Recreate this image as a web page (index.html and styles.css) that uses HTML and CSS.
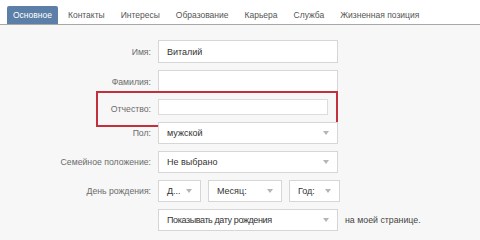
FILE: index.html
```html
<!DOCTYPE html>
<html lang="ru">
<head>
<meta charset="utf-8">
<link rel="stylesheet" href="styles.css">
</head>
<body>
<div class="tabs">
  <span class="tab active">Основное</span>
  <span class="tab">Контакты</span>
  <span class="tab">Интересы</span>
  <span class="tab">Образование</span>
  <span class="tab">Карьера</span>
  <span class="tab">Служба</span>
  <span class="tab">Жизненная позиция</span>
</div>
<div class="form">
  <div class="row tall">
    <span class="lbl">Имя:</span>
    <div class="field w180">Виталий</div>
  </div>
  <div class="row tall">
    <span class="lbl">Фамилия:</span>
    <div class="field w180"></div>
  </div>
  <div class="row mid">
    <span class="lbl">Отчество:</span>
    <div class="field small"></div>
    <div class="highlight"></div>
  </div>
  <div class="row">
    <span class="lbl">Пол:</span>
    <div class="field select w180"><span>мужской</span><i class="arrow"></i></div>
  </div>
  <div class="row">
    <span class="lbl">Семейное положение:</span>
    <div class="field select w180"><span>Не выбрано</span><i class="arrow"></i></div>
  </div>
  <div class="row">
    <span class="lbl">День рождения:</span>
    <div class="dates">
      <div class="field select wday"><span>Д...</span><i class="arrow"></i></div>
      <div class="field select wmonth"><span>Месяц:</span><i class="arrow"></i></div>
      <div class="field select wyear"><span>Год:</span><i class="arrow"></i></div>
    </div>
  </div>
  <div class="row">
    <span class="lbl"></span>
    <div class="field select w180"><span class="tight">Показывать дату рождения</span><i class="arrow"></i></div>
    <span class="note">на моей странице.</span>
  </div>
</div>
</body>
</html>
```
FILE: styles.css
```css
html, body {
  margin: 0;
  padding: 0;
}
body {
  width: 480px;
  height: 237px;
  overflow: hidden;
  background: #f7f7f7;
  font-family: "Liberation Sans", Arial, sans-serif;
  font-size: 9px;
  color: #333;
}
.tabs {
  display: flex;
  align-items: flex-end;
  gap: 4px;
  height: 24px;
  padding-left: 7px;
  background: #fff;
  border-bottom: 1px solid #a8a8a8;
}
.tab {
  display: flex;
  align-items: center;
  height: 18px;
  padding: 0 6px;
  color: #555;
  font-size: 8.5px;
  border-radius: 2px 2px 0 0;
}
.tab.active {
  background: #5c7fa7;
  color: #fff;
}
.form {
  padding-top: 15px;
  display: flex;
  flex-direction: column;
}
.row {
  position: relative;
  display: flex;
  align-items: center;
  gap: 7px;
  height: 22px;
  margin-bottom: 7px;
}
.row.tall {
  height: 23px;
}
.row.mid {
  height: 16px;
  margin-top: -1px;
  margin-bottom: 7px;
}
.row.mid .lbl {
  padding-top: 3px;
}
.lbl {
  width: 151px;
  flex: none;
  text-align: right;
  color: #6b6b6b;
  font-size: 8.7px;
}
.field {
  box-sizing: border-box;
  height: 100%;
  display: flex;
  align-items: center;
  padding: 0 8px;
  background: #fff;
  border: 1px solid #d6d6d6;
  color: #333;
  flex: none;
  white-space: nowrap;
}
.tight {
  letter-spacing: -0.4px;
}
.w180 { width: 180px; }
.small { width: 170px; border-color: #dcdcdc; }
.select {
  justify-content: space-between;
}
.dates {
  display: flex;
  gap: 7px;
  height: 100%;
}
.wday { width: 43px; }
.wmonth { width: 74px; }
.wyear { width: 51px; }
.arrow {
  width: 0;
  height: 0;
  border-left: 3.5px solid transparent;
  border-right: 3.5px solid transparent;
  border-top: 4px solid #b5b5b5;
}
.note {
  color: #444;
  font-size: 8.8px;
}
.highlight {
  position: absolute;
  left: 96px;
  top: -8px;
  width: 242px;
  height: 36px;
  box-sizing: border-box;
  border: 2px solid #c2303d;
}
```
